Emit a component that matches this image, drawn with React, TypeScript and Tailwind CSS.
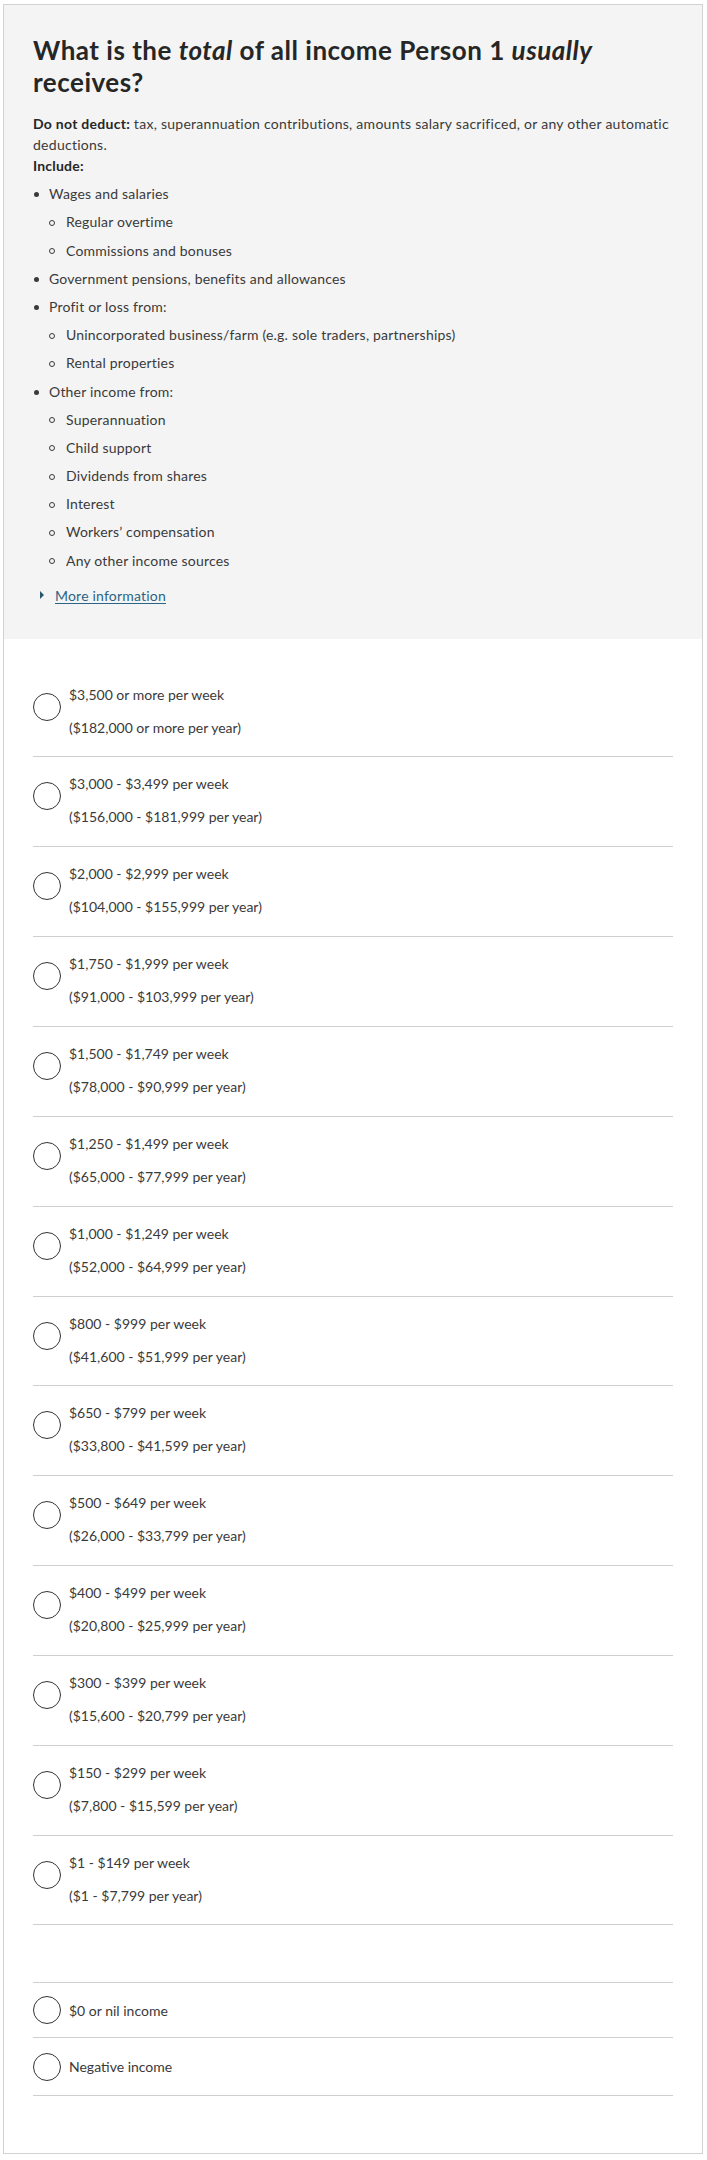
import React from "react";

const font = { fontFamily: '"Segoe UI", Lato, "Noto Sans", sans-serif' };

const options: [string, string][] = [
  ["$3,500 or more per week", "($182,000 or more per year)"],
  ["$3,000 - $3,499 per week", "($156,000 - $181,999 per year)"],
  ["$2,000 - $2,999 per week", "($104,000 - $155,999 per year)"],
  ["$1,750 - $1,999 per week", "($91,000 - $103,999 per year)"],
  ["$1,500 - $1,749 per week", "($78,000 - $90,999 per year)"],
  ["$1,250 - $1,499 per week", "($65,000 - $77,999 per year)"],
  ["$1,000 - $1,249 per week", "($52,000 - $64,999 per year)"],
  ["$800 - $999 per week", "($41,600 - $51,999 per year)"],
  ["$650 - $799 per week", "($33,800 - $41,599 per year)"],
  ["$500 - $649 per week", "($26,000 - $33,799 per year)"],
  ["$400 - $499 per week", "($20,800 - $25,999 per year)"],
  ["$300 - $399 per week", "($15,600 - $20,799 per year)"],
  ["$150 - $299 per week", "($7,800 - $15,599 per year)"],
  ["$1 - $149 per week", "($1 - $7,799 per year)"],
];

const include: { text: string; sub?: string[] }[] = [
  { text: "Wages and salaries", sub: ["Regular overtime", "Commissions and bonuses"] },
  { text: "Government pensions, benefits and allowances" },
  {
    text: "Profit or loss from:",
    sub: ["Unincorporated business/farm (e.g. sole traders, partnerships)", "Rental properties"],
  },
  {
    text: "Other income from:",
    sub: [
      "Superannuation",
      "Child support",
      "Dividends from shares",
      "Interest",
      "Workers\u2019 compensation",
      "Any other income sources",
    ],
  },
];

function Radio() {
  return <span className="block h-[28px] w-[28px] shrink-0 rounded-full border border-[#333]" />;
}

function DoubleRow({ week, year }: { week: string; year: string }) {
  return (
    <label className="flex h-[89.85px] items-start gap-[8px] border-b border-[#cfcfcf] pt-[16px]">
      <span className="mt-[9px]">
        <Radio />
      </span>
      <span className="flex flex-col gap-[12px] leading-[21px]">
        <span>{week}</span>
        <span>{year}</span>
      </span>
    </label>
  );
}

function SingleRow({ label, tall }: { label: string; tall?: boolean }) {
  return (
    <label
      className={
        "flex items-center gap-[8px] border-b border-[#cfcfcf] " + (tall ? "h-[58px]" : "h-[55px]")
      }
    >
      <Radio />
      <span className="leading-[21px]">{label}</span>
    </label>
  );
}

export default function App() {
  return (
    <div className="pl-[3px] pt-[4px] text-[14px] text-[#3a3a3a]" style={font}>
      <div className="w-[700px] border border-[#d2d2d2]">
        <section className="bg-[#f4f4f4] px-[29px] pb-[33px] pt-[29px]">
          <h1 className="text-[26px] font-bold leading-[32px] tracking-[0.5px] text-[#262626]">
            What is the <em>total</em> of all income Person 1 <em>usually</em> receives?
          </h1>
          <p className="mt-[15px] leading-[21px] tracking-[0.27px]">
            <strong className="font-bold text-[#262626]">Do not deduct:</strong> tax, superannuation
            contributions, amounts salary sacrificed, or any other automatic deductions.
          </p>
          <p className="font-bold leading-[21px] tracking-[0.2px] text-[#262626]">Include:</p>
          <ul className="leading-[21px] tracking-[0.2px]">
            {include.map((item) => (
              <li key={item.text} className="mt-[7.2px]">
                <div className="flex">
                  <span className="flex h-[21px] w-[16px] shrink-0 items-center pt-[2px]">
                    <span className="ml-[1px] block h-[5px] w-[5px] rounded-full bg-[#3a3a3a]" />
                  </span>
                  <span>{item.text}</span>
                </div>
                {item.sub && (
                  <ul className="pl-[16px]">
                    {item.sub.map((s) => (
                      <li key={s} className="mt-[7.2px] flex">
                        <span className="flex h-[21px] w-[17px] shrink-0 items-center pt-[2px]">
                          <span className="block h-[6px] w-[6px] rounded-full border border-[#3a3a3a]" />
                        </span>
                        <span>{s}</span>
                      </li>
                    ))}
                  </ul>
                )}
              </li>
            ))}
          </ul>
          <div className="mt-[14px] flex items-center leading-[21px] tracking-[0.2px]">
            <span className="ml-[7px] mr-[11px] block h-0 w-0 border-y-[4px] border-l-[4px] border-y-transparent border-l-[#2b5870]" />
            <a href="#" className="text-[#2a6487] underline underline-offset-2">
              More information
            </a>
          </div>
        </section>
        <section className="px-[29px] pb-[57px] pt-[29px]">
          {options.map(([w, y]) => (
            <DoubleRow key={w} week={w} year={y} />
          ))}
          <div className="h-[58px] border-b border-[#cfcfcf]" />
          <SingleRow label="$0 or nil income" />
          <SingleRow label="Negative income" tall />
        </section>
      </div>
    </div>
  );
}
